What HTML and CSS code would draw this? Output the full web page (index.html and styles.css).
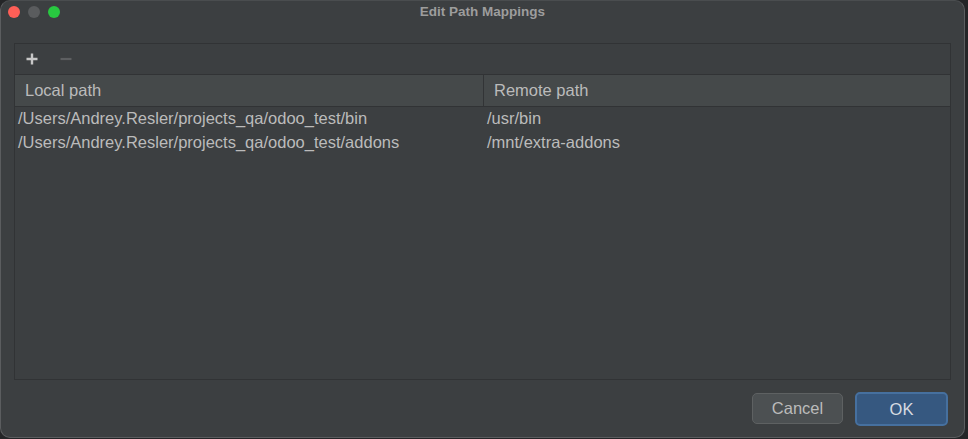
FILE: index.html
```html
<!DOCTYPE html>
<html>
<head>
<meta charset="utf-8">
<link rel="stylesheet" href="styles.css">
</head>
<body>
<div class="window">
  <div class="titlebar">
    <div class="lights">
      <span class="light red"></span>
      <span class="light gray"></span>
      <span class="light green"></span>
    </div>
    <div class="title">Edit Path Mappings</div>
  </div>
  <div class="panel">
    <div class="toolbar">
      <svg class="tool" width="16" height="16" viewBox="0 0 16 16"><path d="M8 2.5v11M2.5 8h11" stroke="#c7c7c7" stroke-width="2.4" fill="none"/></svg>
      <svg class="tool" width="16" height="16" viewBox="0 0 16 16"><path d="M2.5 8h11" stroke="#5d5f61" stroke-width="2.2" fill="none"/></svg>
    </div>
    <div class="table">
      <div class="head">
        <div class="cell c1">Local path</div>
        <div class="cell c2">Remote path</div>
      </div>
      <div class="row">
        <div class="cell c1">/Users/Andrey.Resler/projects_qa/odoo_test/bin</div>
        <div class="cell c2">/usr/bin</div>
      </div>
      <div class="row">
        <div class="cell c1">/Users/Andrey.Resler/projects_qa/odoo_test/addons</div>
        <div class="cell c2">/mnt/extra-addons</div>
      </div>
    </div>
  </div>
  <div class="buttons">
    <button class="btn cancel">Cancel</button>
    <button class="btn ok">OK</button>
  </div>
</div>
</body>
</html>
```
FILE: styles.css
```css
html, body {
  margin: 0;
  padding: 0;
  background: #242527;
  width: 968px;
  height: 439px;
  overflow: hidden;
  font-family: "Liberation Sans", Arial, sans-serif;
}
* { box-sizing: border-box; }
.window {
  width: 965px;
  height: 438px;
  background: #3c3f41;
  border: 1px solid #5b5d5f;
  border-top-color: #4a4d4f;
  border-radius: 10px;
  display: flex;
  flex-direction: column;
  padding: 0 13px 0 13px;
}
.titlebar {
  height: 42px;
  position: relative;
  flex: none;
}
.lights {
  position: absolute;
  left: -6px;
  top: 5px;
  display: flex;
  gap: 8px;
}
.light {
  width: 12px;
  height: 12px;
  border-radius: 50%;
  display: block;
}
.red { background: #fe5f57; }
.gray { background: #5a5c5e; }
.green { background: #28c840; }
.title {
  text-align: center;
  font-weight: bold;
  font-size: 13.5px;
  color: #9d9d9d;
  padding-top: 3px;
  line-height: 16px;
}
.panel {
  flex: none;
  height: 337px;
  border: 1px solid #313335;
  display: flex;
  flex-direction: column;
}
.toolbar {
  height: 31px;
  display: flex;
  align-items: center;
  gap: 18px;
  padding-left: 9px;
  padding-bottom: 1px;
  border-bottom: 1px solid #313335;
  flex: none;
}
.tool { display: block; }
.table { flex: 1; }
.head {
  display: flex;
  height: 32px;
  background: #45494a;
  border-bottom: 1px solid #313335;
  color: #bbbbbb;
  font-size: 16.5px;
}
.head .cell {
  line-height: 30px;
  padding-left: 10px;
}
.head .c1 {
  width: 469px;
  border-right: 1px solid #323436;
}
.row {
  display: flex;
  height: 24px;
  line-height: 22px;
  color: #bbbbbb;
  font-size: 16.5px;
}
.row .c1 {
  width: 469px;
  padding-left: 3px;
}
.row .c2 { padding-left: 3px; }
.buttons {
  flex: none;
  display: flex;
  justify-content: flex-end;
  gap: 12px;
  padding-top: 12px;
  padding-right: 3px;
}
.btn {
  font-family: "Liberation Sans", Arial, sans-serif;
  font-size: 16.5px;
  border-radius: 5px;
  padding: 0;
}
.cancel {
  width: 91px;
  margin-top: 1px;
  height: 31px;
  background: #4c5052;
  border: 1px solid #5e6162;
  color: #bbbbbb;
}
.ok {
  width: 93px;
  height: 34px;
  background: #365880;
  border: 2px solid #46709f;
  color: #d6dbe1;
}
```
